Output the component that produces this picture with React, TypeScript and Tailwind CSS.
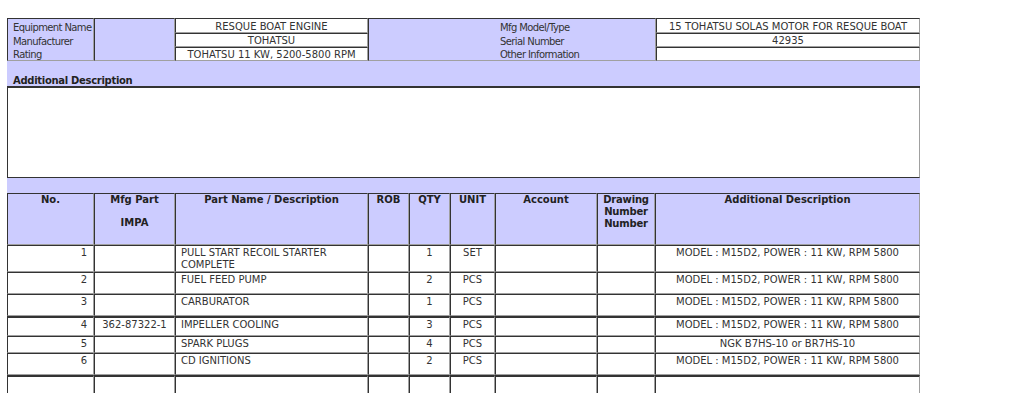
const cell =
  "border border-[#a0a0a0] border-t-[#333] border-l-[#333] p-0 align-top";

const parts = [
  { no: "1", mfg: "", name: "PULL START RECOIL STARTER COMPLETE", qty: "1", unit: "SET", desc: "MODEL : M15D2, POWER : 11 KW, RPM 5800", h: "h-[27px]", top: "" },
  { no: "2", mfg: "", name: "FUEL FEED PUMP", qty: "2", unit: "PCS", desc: "MODEL : M15D2, POWER : 11 KW, RPM 5800", h: "h-[22px]", top: "" },
  { no: "3", mfg: "", name: "CARBURATOR", qty: "1", unit: "PCS", desc: "MODEL : M15D2, POWER : 11 KW, RPM 5800", h: "h-[22px]", top: "" },
  { no: "4", mfg: "362-87322-1", name: "IMPELLER COOLING", qty: "3", unit: "PCS", desc: "MODEL : M15D2, POWER : 11 KW, RPM 5800", h: "h-[20px]", top: "border-t-2" },
  { no: "5", mfg: "", name: "SPARK PLUGS", qty: "4", unit: "PCS", desc: "NGK B7HS-10 or BR7HS-10", h: "h-[17px]", top: "" },
  { no: "6", mfg: "", name: "CD IGNITIONS", qty: "2", unit: "PCS", desc: "MODEL : M15D2, POWER : 11 KW, RPM 5800", h: "h-[22px]", top: "" },
];

function PartCols() {
  return (
    <colgroup>
      <col className="w-[87px]" />
      <col className="w-[81px]" />
      <col className="w-[193px]" />
      <col className="w-[41px]" />
      <col className="w-[41px]" />
      <col className="w-[45px]" />
      <col className="w-[102px]" />
      <col className="w-[58px]" />
      <col className="w-[265px]" />
    </colgroup>
  );
}

export default function App() {
  return (
    <div className="w-[1024px] h-[393px] overflow-hidden bg-white font-['DejaVu_Sans',Verdana,sans-serif] text-[10px] leading-[12px] text-[#333]">
      <div className="ml-[7px] pt-[18px] w-[913px]">
        {/* equipment header */}
        <table className="table-fixed border-separate border-spacing-0 w-[913px]">
          <colgroup>
            <col className="w-[87px]" />
            <col className="w-[81px]" />
            <col className="w-[193px]" />
            <col className="w-[288px]" />
            <col className="w-[264px]" />
          </colgroup>
          <tbody className="leading-[11px]">
            <tr className="h-[15px]">
              <td rowSpan={3} className={`${cell} bg-[#ccccff] pl-[5px] pt-[3px] whitespace-nowrap tracking-[-0.6px]`}>
                <div className="h-[14px]">Equipment Name</div>
                <div className="h-[13px]">Manufacturer</div>
                <div className="h-[11px]">Rating</div>
              </td>
              <td rowSpan={3} className={`${cell} bg-[#ccccff]`}></td>
              <td className={`${cell} h-[15px] text-center pt-[2px]`}>RESQUE BOAT ENGINE</td>
              <td rowSpan={3} className={`${cell} bg-[#ccccff] pl-[131px] pt-[3px] whitespace-nowrap tracking-[-0.6px]`}>
                <div className="h-[14px]">Mfg Model/Type</div>
                <div className="h-[13px]">Serial Number</div>
                <div className="h-[11px]">Other Information</div>
              </td>
              <td className={`${cell} text-center pt-[2px]`}>15 TOHATSU SOLAS MOTOR FOR RESQUE BOAT</td>
            </tr>
            <tr className="h-[14px]">
              <td className={`${cell} h-[14px] text-center pt-[1px]`}>TOHATSU</td>
              <td className={`${cell} text-center pt-[1px]`}>42935</td>
            </tr>
            <tr className="h-[14px]">
              <td className={`${cell} h-[14px] text-center pt-[1px] whitespace-nowrap`}>TOHATSU 11 KW, 5200-5800 RPM</td>
              <td className={`${cell} text-center pt-[1px]`}></td>
            </tr>
          </tbody>
        </table>

        {/* additional description */}
        <div className="h-[27px] bg-[#ccccff] border-b-2 border-[#333] pl-[6px] pt-[14px] font-bold text-[#222] tracking-[-0.3px]">
          Additional Description
        </div>
        <div className="h-[90px] bg-white border-l border-b border-r border-[#333] border-r-[#a0a0a0]"></div>
        <div className="h-[15px] bg-[#ccccff]"></div>

        {/* parts list */}
        <table className="table-fixed border-separate border-spacing-0 w-[913px]">
          <PartCols />
          <thead>
            <tr className="h-[52px] bg-[#ccccff] font-bold text-[#222] text-center">
              <th className={`${cell} h-[52px]`}>No.</th>
              <th className={cell}>
                <div>Mfg Part</div>
                <div className="mt-[11px]">IMPA</div>
              </th>
              <th className={cell}>Part Name / Description</th>
              <th className={cell}>ROB</th>
              <th className={cell}>QTY</th>
              <th className={cell}>UNIT</th>
              <th className={cell}>Account</th>
              <th className={`${cell} tracking-[-0.2px]`}>
                <div>Drawing</div>
                <div>Number</div>
                <div>Number</div>
              </th>
              <th className={cell}>Additional Description</th>
            </tr>
          </thead>
          <tbody>
            {parts.map((p) => (
              <tr key={p.no} className={p.h}>
                <td className={`${cell} ${p.top} ${p.h} text-right pr-[6px] pt-px`}>{p.no}</td>
                <td className={`${cell} ${p.top} text-center pt-px`}>{p.mfg}</td>
                <td className={`${cell} ${p.top} pl-[5px] pr-[40px] pt-px`}>{p.name}</td>
                <td className={`${cell} ${p.top}`}></td>
                <td className={`${cell} ${p.top} text-center pt-px`}>{p.qty}</td>
                <td className={`${cell} ${p.top} text-center pt-px`}>{p.unit}</td>
                <td className={`${cell} ${p.top}`}></td>
                <td className={`${cell} ${p.top}`}></td>
                <td className={`${cell} ${p.top} text-center pt-px`}>{p.desc}</td>
              </tr>
            ))}
            <tr className="h-[25px]">
              <td className={`${cell} border-t-2 h-[25px]`}></td>
              <td className={`${cell} border-t-2`}></td>
              <td className={`${cell} border-t-2`}></td>
              <td className={`${cell} border-t-2`}></td>
              <td className={`${cell} border-t-2`}></td>
              <td className={`${cell} border-t-2`}></td>
              <td className={`${cell} border-t-2`}></td>
              <td className={`${cell} border-t-2`}></td>
              <td className={`${cell} border-t-2`}></td>
            </tr>
          </tbody>
        </table>
      </div>
    </div>
  );
}
